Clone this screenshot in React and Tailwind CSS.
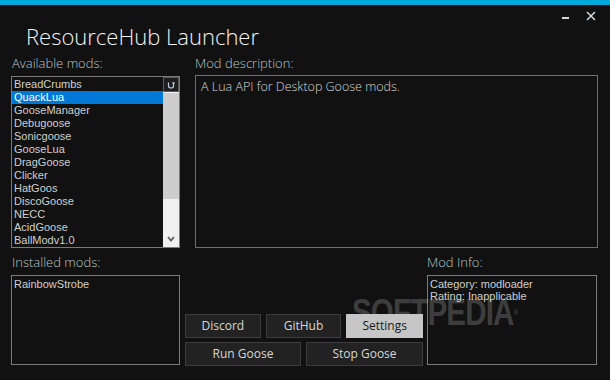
import React from "react";

const mods = [
  "BreadCrumbs",
  "QuackLua",
  "GooseManager",
  "Debugoose",
  "Sonicgoose",
  "GooseLua",
  "DragGoose",
  "Clicker",
  "HatGoos",
  "DiscoGoose",
  "NECC",
  "AcidGoose",
  "BallModv1.0",
];

const ui = { fontFamily: '"Open Sans", "Noto Sans", sans-serif' };
const list = { fontFamily: '"Liberation Sans", Arial, sans-serif' };

const Label = ({ children, className = "" }) => (
  <div className={`text-[13px] leading-[18px] font-light text-[#b9c3c7] ${className}`} style={ui}>
    {children}
  </div>
);

const Button = ({ children, className = "", active = false }) => (
  <button
    className={`h-[24px] border text-[12px] flex items-center justify-center ${
      active
        ? "relative z-10 bg-[#c6c6c6] border-[#c6c6c6] text-[#1a1a1a]"
        : "bg-[#222222] border-[#3c3c3c] text-[#d6d6d6]"
    } ${className}`}
    style={ui}
  >
    {children}
  </button>
);

export default function App() {
  return (
    <div className="w-[610px] h-[380px] bg-[#111111] flex flex-col relative overflow-hidden">
      <div className="h-[5px] bg-[#00a9da]" />

      <div className="h-[49px] flex justify-between items-start">
        <h1 className="ml-[26px] mt-[17px] text-[22px] leading-[28px] font-light text-[#f2f2f2]" style={ui}>
          ResourceHub Launcher
        </h1>
        <div className="flex items-center gap-[17px] mr-[14px] mt-[6px]">
          <div className="w-[7px] h-[2px] bg-[#d8d8d8] mt-[4px]" />
          <svg width="10" height="10" viewBox="0 0 10 10">
            <path d="M1 1 L9 9 M9 1 L1 9" stroke="#d8e4ec" strokeWidth="1.4" />
          </svg>
        </div>
      </div>

      <div className="flex pl-[11px] gap-[15px] h-[21px] items-start">
        <Label className="w-[169px] pl-[1px]">Available mods:</Label>
        <Label>Mod description:</Label>
      </div>

      <div className="flex pl-[11px] gap-[15px] items-start">
        <div className="w-[169px] h-[172px] mt-[1px] border border-[#7a7a7a] flex">
          <div className="flex-1 pt-[1px] overflow-hidden" style={list}>
            {mods.map((m, i) => (
              <div
                key={m}
                className={`h-[13px] text-[11px] leading-[13px] pl-[2px] whitespace-nowrap ${
                  i === 1 ? "bg-[#0078d7] text-white" : "text-[#cfcfcf]"
                }`}
              >
                {m}
              </div>
            ))}
          </div>
          <div className="w-[16px] flex flex-col bg-[#f0f0f0]">
            <div className="h-[15px] bg-[#1e1e1e] border border-[#5a5a5a] flex items-center justify-center">
              <svg width="8" height="8" viewBox="0 0 8 8">
                <path d="M1.5 1.5 V5 Q1.5 7 4 7 Q6.5 7 6.5 5 V1.5" stroke="#b8c8e0" strokeWidth="1.2" fill="none" />
                <path d="M5.5 2.5 L6.5 1 L7.5 2.5" stroke="#b8c8e0" strokeWidth="1" fill="none" />
              </svg>
            </div>
            <div className="h-[106px] bg-[#cdcdcd] mt-[1px]" />
            <div className="flex-1 flex items-end justify-center pb-[5px]">
              <svg width="8" height="6" viewBox="0 0 8 6">
                <path d="M1 1 L4 4.5 L7 1" stroke="#606060" strokeWidth="1.8" fill="none" />
              </svg>
            </div>
          </div>
        </div>

        <div className="w-[403px] h-[173px] border border-[#6e6e6e] px-[5px] pt-[2px]">
          <div className="text-[12.5px] leading-[18px] font-light text-[#d4d4d4]" style={ui}>
            A Lua API for Desktop Goose mods.
          </div>
        </div>
      </div>

      <div className="flex pl-[11px] h-[27px] items-start pt-[5px]">
        <Label className="w-[416px] pl-[1px]">Installed mods:</Label>
        <Label>Mod Info:</Label>
      </div>

      <div className="flex pl-[11px] items-start">
        <div className="w-[169px] h-[90px] border border-[#7a7a7a] px-[2px] pt-[2px]" style={list}>
          <div className="text-[11px] leading-[13px] text-[#cfcfcf]">RainbowStrobe</div>
        </div>

        <div className="w-[238px] ml-[5px] mt-[39px] flex flex-col gap-[4px]">
          <div className="flex gap-[5px]">
            <Button className="w-[76px]">Discord</Button>
            <Button className="w-[76px]">GitHub</Button>
            <Button className="w-[77px]" active>Settings</Button>
          </div>
          <div className="flex gap-[5px]">
            <Button className="w-[116px]">Run Goose</Button>
            <Button className="w-[117px]">Stop Goose</Button>
          </div>
        </div>

        <div className="w-[170px] h-[90px] ml-[4px] border border-[#7a7a7a] px-[2px] pt-[2px]" style={list}>
          <div className="text-[11px] leading-[12px] text-[#cfcfcf]">Category: modloader</div>
          <div className="text-[11px] leading-[12px] text-[#cfcfcf]">Rating: Inapplicable</div>
        </div>
      </div>

      <div
        className="absolute left-[352px] top-[295px] text-[36px] leading-[36px] font-bold tracking-[-1px] text-white/20 pointer-events-none origin-left scale-x-[0.82]"
        style={{ fontFamily: '"Liberation Sans", Arial, sans-serif' }}
      >
        SOFTPEDIA<span className="text-[8px] align-top">®</span>
      </div>
    </div>
  );
}
